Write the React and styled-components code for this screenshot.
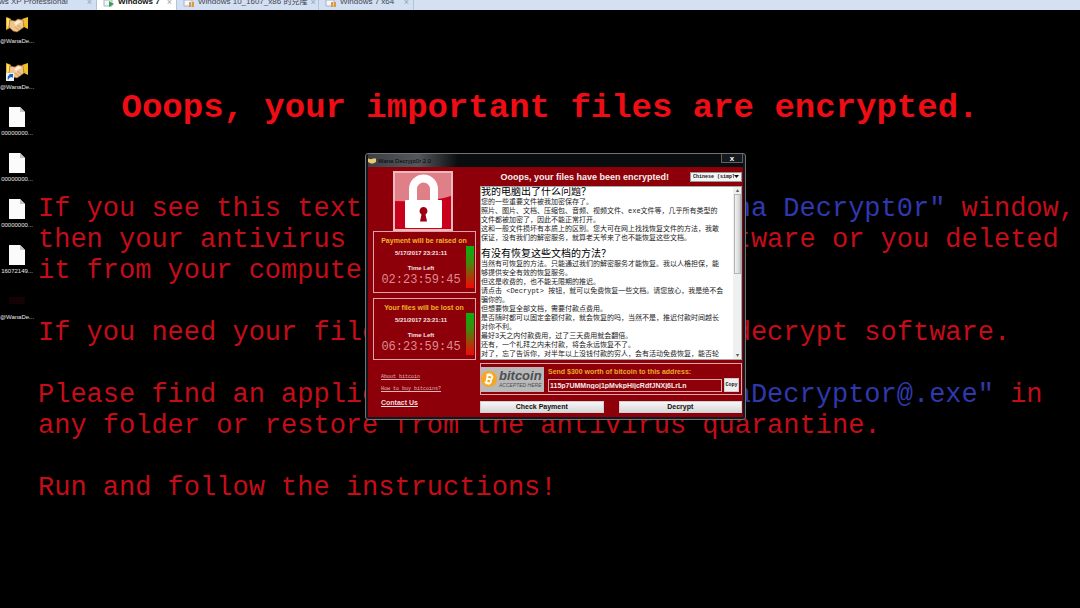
import styled, { createGlobalStyle } from "styled-components";

const TABS = [
  { name: "Windows XP Professional", width: 97, first: true },
  { name: "Windows 7", width: 80, active: true },
  { name: "Windows 10_1607_x86 的克隆", width: 142 },
  { name: "Windows 7 x64", width: 95 },
];

const FILES = [
  { label: "@WanaDe...", kind: "hands" },
  { label: "@WanaDe...", kind: "shortcut" },
  { label: "00000000...", kind: "doc" },
  { label: "00000000...", kind: "doc" },
  { label: "00000000...", kind: "doc" },
  { label: "16072149...", kind: "doc" },
  { label: "@WanaDe...", kind: "dim" },
];

const NOTE = [
  {
    title: "我的电脑出了什么问题？",
    lines: [
      "您的一些重要文件被我加密保存了。",
      "照片、图片、文档、压缩包、音频、视频文件、exe文件等，几乎所有类型的",
      "文件都被加密了，因此不能正常打开。",
      "这和一般文件损坏有本质上的区别。您大可在网上找找恢复文件的方法，我敢",
      "保证，没有我们的解密服务，就算老天爷来了也不能恢复这些文档。",
    ],
  },
  {
    title: "有没有恢复这些文档的方法？",
    lines: [
      "当然有可恢复的方法。只能通过我们的解密服务才能恢复。我以人格担保，能",
      "够提供安全有效的恢复服务。",
      "但这是收费的，也不能无限期的推迟。",
      "请点击 <Decrypt> 按钮，就可以免费恢复一些文档。请您放心，我是绝不会",
      "骗你的。",
      "但想要恢复全部文档，需要付款点费用。",
      "是否随时都可以固定金额付款，就会恢复的吗，当然不是，推迟付款时间越长",
      "对你不利。",
      "最好3天之内付款费用，过了三天费用就会翻倍。",
      "还有，一个礼拜之内未付款，将会永远恢复不了。",
      "对了，忘了告诉你，对半年以上没钱付款的穷人，会有活动免费恢复，能否轮",
    ],
  },
];

const TIMERS = [
  {
    title: "Payment will be raised on",
    date: "5/17/2017 23:21:11",
    left: "02:23:59:45",
  },
  {
    title: "Your files will be lost on",
    date: "5/21/2017 23:21:11",
    left: "06:23:59:45",
  },
];

const MachineIcon = ({ running }) => (
  <svg width="12" height="8" viewBox="0 0 12 8">
    <path d="M1 0h8v6H1z" fill="#f4f7fb" stroke="#a9b4c4" />
    {running ? (
      <path d="M6 1l5 3-5 3z" fill="#35a845" />
    ) : (
      <path d="M6 2h2v5H6zM9 2h2v5H9z" fill="#e09a3c" />
    )}
  </svg>
);

const Handshake = ({ shortcut }) => (
  <svg width="22" height="20" viewBox="0 0 22 20">
    <path d="M0 2l3 1 2 1-1 9-4 2z" fill="#e9b41f" />
    <path d="M22 2l-3 1-3 1 2 8 4 2z" fill="#f0c02a" />
    <path d="M1 3l2 1v7l-2 2z" fill="#fbe27a" />
    <path
      d="M4 5l5 1 3-2 5 1 1 7-4 3-3 2-4-1-4-4z"
      fill="#f0c48c"
      stroke="#9a6528"
      strokeWidth="0.6"
    />
    <path d="M8 8l4-3 4 2-3 1-3 3z" fill="#fdebd0" />
    <path
      d="M9 12l4 3M11 10l4 3"
      stroke="#b98648"
      strokeWidth="0.6"
      fill="none"
    />
    {shortcut && (
      <g>
        <path d="M0 12h8v8H0z" fill="#e8f1fa" />
        <path d="M2 19c-1-4 1-5 2-5l-1-1h4v4l-1-1c-2 0-3 1-4 3z" fill="#1c5fb5" />
      </g>
    )}
  </svg>
);

const Document = () => (
  <svg width="16" height="20" viewBox="0 0 16 20">
    <path d="M0 0h11l5 5v15H0z" fill="#fbfbfb" />
    <path d="M11 0v5h5z" fill="#c4c4c4" />
  </svg>
);

const DimIcon = () => (
  <svg width="16" height="20" viewBox="0 0 16 20">
    <path d="M0 6h16v7H0z" fill="#150205" />
  </svg>
);

const FileIcon = ({ kind }) => {
  if (kind === "doc") return <Document />;
  if (kind === "dim") return <DimIcon />;
  return <Handshake shortcut={kind === "shortcut"} />;
};

const Padlock = () => (
  <svg width="60" height="60" viewBox="0 0 60 60" role="img" aria-label="Lock">
    <path d="M0 0h60v60H0z" fill="#c8001c" />
    <path d="M0 0h60v24Q44 31 0 30z" fill="#df7f88" />
    <path d="M1 1h58v58H1z" fill="none" stroke="#f0b9bd" strokeWidth="2" />
    <path
      d="M20 31V18a10.500 10.500 0 0 1 21 0v13"
      fill="none"
      stroke="#fff"
      strokeWidth="8"
    />
    <rect x="12" y="29" width="37" height="28" rx="1" fill="#fff" />
    <path
      d="M30.500 36a4 4 0 0 1 2 7.400l1.500 7.100h-7l1.500-7.100a4 4 0 0 1 2-7.400z"
      fill="#9c0012"
    />
  </svg>
);

const BitcoinMark = () => (
  <svg width="17" height="18" viewBox="0 0 17 18">
    <circle cx="8" cy="9" r="8" fill="#f5a623" />
    <g transform="rotate(12 8 9)" fill="none" stroke="#fff" strokeWidth="1.800">
      <path d="M6 4.500v9M4.500 5h4.500a2 2 0 0 1 0 4H6M9 9a2.200 2.200 0 0 1 0 4.200H4.500" />
      <path d="M7 3v2M9 3v2M7 13v2M9 13v2" strokeWidth="1" />
    </g>
  </svg>
);

const CountdownPanel = ({ title, date, left }) => (
  <Panel>
    <PanelText>
      <PanelTitle>{title}</PanelTitle>
      <PanelLabel>{date}</PanelLabel>
      <TimeLeft>Time Left</TimeLeft>
      <Digits>{left}</Digits>
    </PanelText>
    <Gauge />
  </Panel>
);

const DecryptorWindow = () => (
  <Window>
    <TitleBar>
      <svg width="8" height="6" viewBox="0 0 22 16">
        <path d="M0 1l8 2 6-2 8 0v10l-8 4-6 0-8-4z" fill="#ecca74" />
      </svg>
      <WindowTitle>Wana Decrypt0r 2.0</WindowTitle>
      <CloseButton aria-label="Close">x</CloseButton>
    </TitleBar>
    <WindowBody>
      <Side>
        <LockHolder>
          <Padlock />
        </LockHolder>
        {TIMERS.map((timer) => (
          <CountdownPanel key={timer.title} {...timer} />
        ))}
        <Links>
          <SmallLink href="#about">About bitcoin</SmallLink>
          <SmallLink href="#buy">How to buy bitcoins?</SmallLink>
          <ContactLink href="#contact">Contact Us</ContactLink>
        </Links>
      </Side>
      <Main>
        <Header>
          <Heading>Ooops, your files have been encrypted!</Heading>
          <LanguageBox>
            <Language aria-label="Language" defaultValue="zh">
              <option value="zh">Chinese (simpl</option>
              <option value="en">English</option>
            </Language>
            <svg width="5" height="3" viewBox="0 0 5 3">
              <path d="M0 0h5L2.500 3z" fill="#111" />
            </svg>
          </LanguageBox>
        </Header>
        <NoteBox>
          <NoteText lang="zh-CN">
            {NOTE.map((section) => (
              <section key={section.title}>
                <NoteTitle>{section.title}</NoteTitle>
                {section.lines.map((line) => (
                  <NoteLine key={line}>{line}</NoteLine>
                ))}
              </section>
            ))}
          </NoteText>
          <ScrollBar>
            <span>▴</span>
            <Thumb />
            <span>▾</span>
          </ScrollBar>
        </NoteBox>
        <PaymentBox>
          <BitcoinLogo>
            <BitcoinMark />
            <BitcoinWords>
              <b>bitcoin</b>
              <small>ACCEPTED HERE</small>
            </BitcoinWords>
          </BitcoinLogo>
          <PaymentFields>
            <PaymentLabel htmlFor="address">
              Send $300 worth of bitcoin to this address:
            </PaymentLabel>
            <AddressRow>
              <Address
                id="address"
                readOnly
                value="115p7UMMngoj1pMvkpHijcRdfJNXj6LrLn"
              />
              <CopyButton>Copy</CopyButton>
            </AddressRow>
          </PaymentFields>
        </PaymentBox>
        <Actions>
          <ActionButton>Check Payment</ActionButton>
          <ActionButton>Decrypt</ActionButton>
        </Actions>
      </Main>
    </WindowBody>
  </Window>
);

const App = () => {
  return (
    <Page>
      <GlobalStyle />
      <TabStrip>
        {TABS.map(({ name, width, active, first }) => (
          <Tab key={name} $width={width} $active={active} $first={first}>
            {!first && <MachineIcon running={active} />}
            <TabName>{name}</TabName>
            <TabClose $first={first}>×</TabClose>
          </Tab>
        ))}
      </TabStrip>
      <Desktop>
        <Files>
          {FILES.map(({ label, kind }, i) => (
            <File key={i}>
              <FileIcon kind={kind} />
              <FileLabel>{label}</FileLabel>
            </File>
          ))}
        </Files>
        <Wallpaper>
          <WallpaperTitle>
            Ooops, your important files are encrypted.
          </WallpaperTitle>
          <Paragraph>
            If you see this text, but don't see the{" "}
            <Blue>"Wana Decrypt0r"</Blue> window,
            <br />
            then your antivirus removed the decrypt software or you deleted
            <br />
            it from your computer.
          </Paragraph>
          <Paragraph>
            If you need your files you have to run the decrypt software.
          </Paragraph>
          <Paragraph>
            Please find an application file named{" "}
            <Blue>"@WanaDecryptor@.exe"</Blue> in
            <br />
            any folder or restore from the antivirus quarantine.
          </Paragraph>
          <Paragraph>Run and follow the instructions!</Paragraph>
        </Wallpaper>
        <DecryptorWindow />
      </Desktop>
    </Page>
  );
};

const GlobalStyle = createGlobalStyle`
  * {
    box-sizing: border-box;
  }

  body {
    margin: 0;
    background: #000;
    font-family: "Liberation Sans", "Noto Sans CJK SC", sans-serif;
  }

  h1, h2, h3, p {
    margin: 0;
  }

  svg {
    display: block;
    flex: none;
  }

  button, input, select {
    font-family: inherit;
    margin: 0;
    padding: 0;
    border-radius: 0;
  }
`;

const Page = styled.div`
  min-height: 100vh;
  display: flex;
  flex-direction: column;
  background: #000;
  overflow: hidden;
`;

const TabStrip = styled.nav`
  display: flex;
  height: 10px;
  overflow: hidden;
  background: #d6e0f3;
`;

const Tab = styled.div`
  flex: none;
  display: flex;
  gap: 3px;
  width: ${(props) => props.$width}px;
  height: 10px;
  padding: 0 4px 0 6px;
  justify-content: ${(props) => (props.$first ? "flex-end" : "flex-start")};
  border-right: 1px solid #b4c3d8;
  background: ${(props) => (props.$active ? "#fff" : "#d3dff2")};
  color: ${(props) => (props.$active ? "#111" : "#3f4650")};
  font-weight: ${(props) => (props.$active ? "bold" : "normal")};
  font-size: 8px;
  line-height: 4px;
  white-space: nowrap;
`;

const TabName = styled.span`
  flex: none;
`;

const TabClose = styled.span`
  margin-left: ${(props) => (props.$first ? "16px" : "auto")};
  color: #98a2b0;
  font-weight: normal;
  font-size: 9px;
`;

const Desktop = styled.main`
  position: relative;
  flex: 1;
  display: flex;
`;

const Files = styled.div`
  flex: none;
  display: flex;
  flex-direction: column;
  gap: 16px;
  width: 38px;
  padding-top: 5px;
`;

const File = styled.div`
  display: flex;
  flex-direction: column;
  align-items: center;
  gap: 2px;
  width: 34px;
`;

const FileLabel = styled.span`
  color: #e8e8e8;
  font-size: 6px;
  line-height: 8px;
  white-space: nowrap;
`;

const Wallpaper = styled.div`
  flex: 1;
  min-width: 0;
  padding: 78px 18px 0 0;
  color: #c40d18;
  font-family: "Liberation Mono", monospace;
  font-size: 27px;
  line-height: 31px;
  white-space: nowrap;
`;

const WallpaperTitle = styled.h1`
  margin-bottom: 66px;
  color: #ee0d14;
  font-size: 34px;
  line-height: 40px;
  text-align: center;
`;

const Paragraph = styled.p`
  margin-bottom: 31px;
`;

const Blue = styled.span`
  color: #2f38ac;
`;

const Window = styled.section`
  position: absolute;
  top: 143px;
  left: 365px;
  width: 381px;
  padding: 0 2px 2px;
  border: 1px solid #6f7478;
  border-radius: 3px;
  background: #14181c;
`;

const TitleBar = styled.header`
  display: flex;
  align-items: center;
  gap: 2px;
  height: 13px;
  background: linear-gradient(90deg, #3c4044, #54585c 50px, #0a0d10 90px);
`;

const WindowTitle = styled.span`
  flex: 1;
  color: #050505;
  font-size: 6px;
  line-height: 12px;
`;

const CloseButton = styled.button`
  align-self: flex-start;
  width: 22px;
  height: 9px;
  border: 1px solid #5c6166;
  border-top: 0;
  background: #15191d;
  color: #fff;
  font-size: 8px;
  font-weight: bold;
  line-height: 7px;
`;

const WindowBody = styled.div`
  display: flex;
  gap: 4px;
  padding: 4px 1px 4px 5px;
  background: #8e0009;
`;

const Side = styled.div`
  flex: none;
  display: flex;
  flex-direction: column;
  width: 103px;
`;

const LockHolder = styled.div`
  padding-left: 20px;
`;

const Panel = styled.div`
  display: flex;
  gap: 2px;
  height: 62px;
  padding: 3px 1px 4px 4px;
  border: 1px solid #dfa4a6;

  & + & {
    margin-top: 5px;
  }
`;

const PanelText = styled.div`
  flex: 1;
  min-width: 0;
  display: flex;
  flex-direction: column;
  align-items: center;
  color: #f3e4e4;
  font-weight: bold;
  white-space: nowrap;
`;

const PanelTitle = styled.h3`
  padding-left: 6px;
  color: #f0b429;
  font-size: 7px;
  line-height: 12px;
`;

const PanelLabel = styled.span`
  font-size: 6px;
  line-height: 12px;
`;

const TimeLeft = styled(PanelLabel)`
  padding-top: 4px;
  line-height: 10px;
`;

const Digits = styled.span`
  color: #dc8d90;
  font-family: "Liberation Mono", monospace;
  font-size: 12px;
  font-weight: normal;
  line-height: 15px;
`;

const Gauge = styled.div`
  flex: none;
  width: 8px;
  margin-top: 11px;
  background: linear-gradient(#08b010, #3f8a0c 40%, #b03808 75%, #f00808);
`;

const Links = styled.div`
  display: flex;
  flex-direction: column;
  padding: 11px 0 0 8px;
`;

const SmallLink = styled.a`
  color: #e0b8ba;
  font-family: "Liberation Mono", monospace;
  font-size: 5px;
  line-height: 12px;
`;

const ContactLink = styled.a`
  color: #f0dcdc;
  font-size: 7px;
  font-weight: bold;
  line-height: 16px;
`;

const Main = styled.div`
  flex: 1;
  min-width: 0;
  display: flex;
  flex-direction: column;
`;

const Header = styled.div`
  display: flex;
  align-items: center;
  justify-content: flex-end;
  gap: 21px;
  height: 11px;
  margin-bottom: 4px;
`;

const Heading = styled.h2`
  color: #f8eeee;
  font-size: 9px;
  line-height: 10px;
  white-space: nowrap;
`;

const LanguageBox = styled.div`
  flex: none;
  display: flex;
  align-items: center;
  width: 52px;
  height: 10px;
  padding: 0 2px;
  border: 1px solid #999;
  background: #f4f4f4;
`;

const Language = styled.select`
  flex: 1;
  min-width: 0;
  height: 8px;
  appearance: none;
  border: 0;
  background: transparent;
  color: #111;
  font-family: "Liberation Mono", monospace;
  font-size: 5px;
  font-weight: bold;
`;

const NoteBox = styled.div`
  display: flex;
  height: 174px;
  overflow: hidden;
  border: 1px solid #a8a8a8;
  background: #fff;
`;

const NoteText = styled.div`
  flex: 1;
  min-width: 0;
  color: #222;
  font-family: "Liberation Mono", "Noto Sans CJK SC", monospace;
  font-size: 7px;
  line-height: 9px;
  white-space: nowrap;

  section + section {
    margin-top: 6px;
  }
`;

const NoteTitle = styled.h3`
  font-size: 10px;
  font-weight: normal;
  line-height: 11px;
  color: #000;
`;

const NoteLine = styled.p`
  line-height: 9px;
`;

const ScrollBar = styled.div`
  flex: none;
  display: flex;
  flex-direction: column;
  justify-content: space-between;
  align-items: center;
  width: 8px;
  background: #f0f0f0;
  color: #555;
  font-size: 6px;
  line-height: 7px;
`;

const Thumb = styled.div`
  width: 7px;
  height: 80px;
  margin-bottom: auto;
  border: 1px solid #b4b4b4;
  background: linear-gradient(90deg, #f2f2f2, #d0d0d0);
`;

const PaymentBox = styled.div`
  display: flex;
  align-items: center;
  gap: 4px;
  height: 32px;
  margin-top: 3px;
  padding-right: 2px;
  border: 1px solid #dfa4a6;
`;

const BitcoinLogo = styled.div`
  flex: none;
  display: flex;
  align-items: center;
  gap: 1px;
  width: 63px;
  height: 25px;
  background: #b9b9b9;
`;

const BitcoinWords = styled.div`
  display: flex;
  flex-direction: column;
  color: #4c4f52;
  font-style: italic;
  white-space: nowrap;

  b {
    font-size: 13px;
    line-height: 13px;
  }

  small {
    font-size: 5px;
    line-height: 7px;
  }
`;

const PaymentFields = styled.div`
  flex: 1;
  min-width: 0;
`;

const PaymentLabel = styled.label`
  display: block;
  color: #f0a828;
  font-size: 7px;
  font-weight: bold;
  line-height: 12px;
`;

const AddressRow = styled.div`
  display: flex;
  align-items: center;
  gap: 2px;
`;

const Address = styled.input`
  flex: 1;
  min-width: 0;
  height: 13px;
  padding-left: 1px;
  border: 1px solid #dfa4a6;
  background: #8e0009;
  color: #f6eaea;
  font-size: 7px;
  font-weight: bold;
`;

const CopyButton = styled.button`
  width: 15px;
  height: 14px;
  border: 1px solid #ccc;
  background: #eee;
  color: #111;
  font-family: "Liberation Mono", monospace;
  font-size: 5px;
  font-weight: bold;
`;

const Actions = styled.div`
  display: flex;
  gap: 15px;
  margin-top: 6px;
`;

const ActionButton = styled.button`
  flex: 1;
  height: 12px;
  border: 1px solid #d0d0d0;
  background: linear-gradient(#f6f6f6, #d8d8d8);
  color: #111;
  font-size: 7px;
  font-weight: bold;
  line-height: 10px;
`;

export default App;
